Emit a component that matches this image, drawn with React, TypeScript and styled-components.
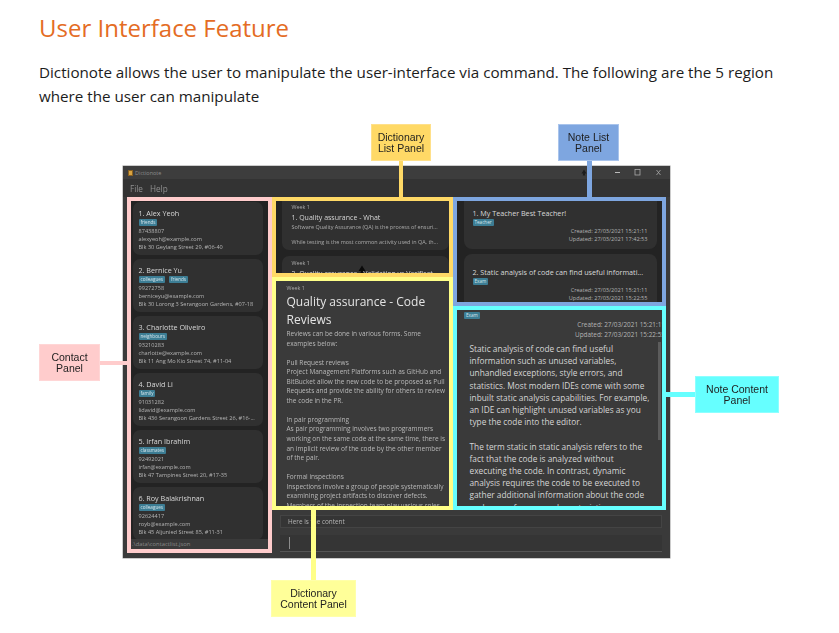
import React from 'react';
import styled, { createGlobalStyle } from 'styled-components';

const GlobalStyle = createGlobalStyle`
  html, body {
    margin: 0;
    padding: 0;
    background: #fff;
    overflow: hidden;
  }
`;

const uiFont = `"Open Sans", "Noto Sans", sans-serif`;

const Page = styled.div`
  width: 839px;
  height: 633px;
  padding: 12px 39px 0;
  box-sizing: border-box;
  overflow: hidden;
  font-family: ${uiFont};
`;

const Heading = styled.h2`
  margin: 0 0 16px;
  font-size: 24px;
  line-height: 32px;
  font-weight: 400;
  color: #e46c24;
`;

const Intro = styled.p`
  margin: 0;
  font-size: 15.2px;
  line-height: 24px;
  color: #1c1c1c;
`;

const Figure = styled.div`
  position: relative;
  height: 517px;
  margin: 8px -39px 0;
  padding-top: 50px;
  box-sizing: border-box;
`;

const Callout = styled.div<{ $x: number; $y: number; $w: number; $bg: string; $edge: string }>`
  position: absolute;
  left: ${(p) => p.$x}px;
  top: ${(p) => p.$y}px;
  width: ${(p) => p.$w}px;
  height: 37px;
  box-sizing: border-box;
  display: flex;
  align-items: center;
  justify-content: center;
  text-align: center;
  font-family: "Liberation Sans", sans-serif;
  font-size: 10.5px;
  line-height: 11px;
  color: #1e1e1e;
  background: ${(p) => p.$bg};
  border: 1px solid ${(p) => p.$edge};
  filter: blur(0.3px);
`;

const Wire = styled.div<{ $x: number; $y: number; $w: number; $h: number; $bg: string }>`
  position: absolute;
  left: ${(p) => p.$x}px;
  top: ${(p) => p.$y}px;
  width: ${(p) => p.$w}px;
  height: ${(p) => p.$h}px;
  background: ${(p) => p.$bg};
`;

const Window = styled.div`
  width: 547px;
  height: 392px;
  margin-left: 123px;
  display: flex;
  flex-direction: column;
  background: #3a3a3a;
  box-shadow: 0 0 0 0.5px #999;
  filter: blur(0.35px);
`;

const TitleBar = styled.div`
  height: 13px;
  flex: none;
  display: flex;
  align-items: center;
  padding: 0 8px 0 5px;
  background: #3d3d3d;
  color: #8c8c8c;
  font-size: 5.5px;
`;

const AppIcon = styled.span`
  width: 5px;
  height: 6px;
  margin-right: 2px;
  background: #d9a441;
  border: 0.5px solid #8a6120;
  box-sizing: border-box;
`;

const TitleText = styled.span`
  flex: 1;
`;

const WinControls = styled.div`
  display: flex;
  align-items: center;
  gap: 13px;
`;

const HoverMark = styled.svg`
  margin-right: 14px;
`;

const MenuBar = styled.div`
  height: 18px;
  flex: none;
  display: flex;
  align-items: center;
  gap: 7px;
  padding: 0 7px;
  background: #333;
  color: #8f8f8f;
  font-size: 8.2px;
`;

const Panels = styled.div`
  flex: 1;
  min-height: 0;
  padding: 0 4px 5px;
  display: grid;
  grid-template-columns: 145px 181px 213px;
  grid-template-rows: 80px 29px 204px 43px;
`;

const Panel = styled.section<{ $column: string; $row: string; $edge: string; $bg: string }>`
  grid-column: ${(p) => p.$column};
  grid-row: ${(p) => p.$row};
  position: relative;
  min-height: 0;
  border: 4.5px solid ${(p) => p.$edge};
  background: ${(p) => p.$bg};
  overflow: hidden;
  display: flex;
  flex-direction: column;
`;

const ContactStack = styled.div`
  flex: 1;
  min-height: 0;
  overflow: hidden;
  padding: 0.5px 5.5px 0 1.5px;
  display: flex;
  flex-direction: column;
  gap: 4px;
`;

const Card = styled.div`
  flex: none;
  height: 53px;
  box-sizing: border-box;
  padding: 6.5px 0 0 6px;
  background: #303030;
  border-radius: 7px;
`;

const CardTitle = styled.div`
  font-size: 7.2px;
  line-height: 10px;
  font-weight: 500;
  color: #d8d8d8;
  white-space: nowrap;
`;

const TagRow = styled.div`
  display: flex;
  gap: 4px;
  height: 8px;
  margin: 1px 0 0;
`;

const Tag = styled.span`
  padding: 0 2px;
  background: #3c7d94;
  color: #d6e6ec;
  font-size: 4.6px;
  line-height: 7px;
  height: 7px;
  border-radius: 1px;
`;

const Detail = styled.div`
  font-size: 5.6px;
  line-height: 8px;
  color: #b4b4b4;
  white-space: nowrap;
`;

const StatusBar = styled.div`
  flex: none;
  height: 10px;
  padding-left: 1px;
  background: #3a3a3a;
  color: #8a8a8a;
  font-size: 5.8px;
  line-height: 10px;
`;

const WordStack = styled.div`
  padding: 0 0 0 5.5px;
  display: flex;
  flex-direction: column;
  gap: 6px;
`;

const WordCard = styled.div`
  flex: none;
  height: 49px;
  box-sizing: border-box;
  padding: 2px 0 0 10px;
  background: #303030;
  border-radius: 0 0 7px 7px;
  overflow: hidden;

  & + & {
    padding-top: 3px;
    border-radius: 7px 7px 0 0;
  }
`;

const WeekLabel = styled.div`
  font-size: 5.4px;
  line-height: 9px;
  color: #aaa;
`;

const WordTitle = styled.div`
  font-size: 7px;
  line-height: 11px;
  color: #d4d4d4;
  white-space: nowrap;
`;

const Snippet = styled.div`
  font-size: 5.45px;
  line-height: 8px;
  margin-bottom: 7px;
  color: #ababab;
  white-space: nowrap;
`;

const Pointer = styled.svg`
  position: absolute;
  left: 82px;
  bottom: 0;
`;

const ArticleBody = styled.div`
  padding: 3px 0 0 10.5px;
`;

const ArticleTitle = styled.div`
  font-size: 12px;
  line-height: 17.5px;
  color: #e4e4e4;
  white-space: pre;
`;

const ArticleText = styled.div`
  margin-top: 1px;
  font-size: 6.5px;
  line-height: 9.55px;
  color: #b9b9b9;
  white-space: pre;
`;

const NoteStack = styled.div`
  padding: 0 5.5px 0 6.5px;
  display: flex;
  flex-direction: column;
  gap: 5px;
`;

const NoteCard = styled.div`
  flex: none;
  height: 48px;
  box-sizing: border-box;
  padding: 7px 9px 0;
  background: #303030;
  border-radius: 0 0 8px 8px;

  & + & {
    height: 60px;
    padding-top: 13px;
    border-radius: 8px 8px 0 0;
  }
`;

const Stamp = styled.div`
  text-align: right;
  font-size: 5.6px;
  line-height: 8px;
  color: #b4b4b4;
`;

const NoteHeader = styled.div`
  padding: 1px 0 0 7px;
`;

const NoteStamp = styled.div`
  text-align: right;
  margin-right: -3px;
  font-size: 6.4px;
  line-height: 10px;
  color: #b4b4b4;
  white-space: nowrap;
`;

const NoteText = styled.div`
  margin: 3px 0 0 5.5px;
  font-size: 8.3px;
  line-height: 12.2px;
  color: #d6d6d6;
  white-space: pre;
`;

const ScrollThumb = styled.div`
  position: absolute;
  right: 1px;
  top: 32px;
  width: 3px;
  height: 98px;
  background: #5c5c5c;
`;

const ConsoleArea = styled.div`
  grid-column: 2 / 4;
  grid-row: 4;
  padding: 5px 4px 0 8px;
  display: flex;
  flex-direction: column;
  gap: 7px;
`;

const ResultBox = styled.div`
  height: 13px;
  box-sizing: border-box;
  padding-left: 7px;
  background: #353535;
  border: 0.5px solid #444;
  color: #b5b5b5;
  font-size: 6.4px;
  line-height: 12px;
`;

const CommandBox = styled.div`
  height: 17px;
  padding: 2px 0 2px 9px;
  box-sizing: border-box;
  background: #353535;
  border-bottom: 1px solid #555;
`;

const Caret = styled.div`
  width: 1px;
  height: 12px;
  background: #8c8c8c;
`;

const contacts = [
  { name: '1.  Alex Yeoh', tags: ['friends'], phone: '87438807', email: 'alexyeoh@example.com', address: 'Blk 30 Geylang Street 29, #06-40' },
  { name: '2.  Bernice Yu', tags: ['colleagues', 'friends'], phone: '99272758', email: 'berniceyu@example.com', address: 'Blk 30 Lorong 3 Serangoon Gardens, #07-18' },
  { name: '3.  Charlotte Oliveiro', tags: ['neighbours'], phone: '93210283', email: 'charlotte@example.com', address: 'Blk 11 Ang Mo Kio Street 74, #11-04' },
  { name: '4.  David Li', tags: ['family'], phone: '91031282', email: 'lidavid@example.com', address: 'Blk 436 Serangoon Gardens Street 26, #16-...' },
  { name: '5.  Irfan Ibrahim', tags: ['classmates'], phone: '92492021', email: 'irfan@example.com', address: 'Blk 47 Tampines Street 20, #17-35' },
  { name: '6.  Roy Balakrishnan', tags: ['colleagues'], phone: '92624417', email: 'royb@example.com', address: 'Blk 45 Aljunied Street 85, #11-31' },
];

const notes = [
  { title: '1.  My Teacher Best Teacher!', tag: 'Teacher', created: '27/03/2021 15:21:11', updated: '27/03/2021 17:42:53' },
  { title: '2.  Static analysis of code can find useful informati...', tag: 'Exam', created: '27/03/2021 15:21:11', updated: '27/03/2021 15:22:55' },
];

const articleText = `Reviews can be done in various forms. Some
examples below:

Pull Request reviews
Project Management Platforms such as GitHub and
BitBucket allow the new code to be proposed as Pull
Requests and provide the ability for others to review
the code in the PR.

In pair programming
As pair programming involves two programmers
working on the same code at the same time, there is
an implicit review of the code by the other member
of the pair.

Formal inspections
Inspections involve a group of people systematically
examining project artifacts to discover defects.
Members of the inspection team play various roles`;

const noteText = `Static analysis of code can find useful
information such as unused variables,
unhandled exceptions, style errors, and
statistics. Most modern IDEs come with some
inbuilt static analysis capabilities. For example,
an IDE can highlight unused variables as you
type the code into the editor.

The term static in static analysis refers to the
fact that the code is analyzed without
executing the code. In contrast, dynamic
analysis requires the code to be executed to
gather additional information about the code
such as performance characteristics.`;

const App: React.FC = () => (
  <Page>
    <GlobalStyle />
    <Heading>User Interface Feature</Heading>
    <Intro>
      Dictionote allows the user to manipulate the user-interface via command. The following are
      the 5 region where the user can manipulate
    </Intro>
    <Figure>
      <Window>
        <TitleBar>
          <AppIcon />
          <TitleText>Dictionote</TitleText>
          <WinControls>
            <HoverMark width="6" height="7" viewBox="0 0 6 7">
              <path d="M3 0.5L5.5 4.5H3.8L4.2 6.5H1.8L2.2 4.5H0.5Z" fill="#1c1c1c" />
            </HoverMark>
            <svg width="7" height="7" viewBox="0 0 7 7">
              <path d="M1 3.5h5" stroke="#bbb" strokeWidth="1" />
            </svg>
            <svg width="8" height="7" viewBox="0 0 8 7">
              <rect x="1" y="0.5" width="5" height="5.5" fill="none" stroke="#aaa" strokeWidth="0.8" />
            </svg>
            <svg width="7" height="7" viewBox="0 0 7 7">
              <path d="M1.5 1l4 5M5.5 1l-4 5" stroke="#aaa" strokeWidth="0.8" />
            </svg>
          </WinControls>
        </TitleBar>
        <MenuBar>
          <span>File</span>
          <span>Help</span>
        </MenuBar>
        <Panels>
          <Panel $column="1" $row="1 / 5" $edge="#ffcccc" $bg="#232323">
            <ContactStack>
              {contacts.map((c) => (
                <Card key={c.name}>
                  <CardTitle>{c.name}</CardTitle>
                  <TagRow>
                    {c.tags.map((t) => (
                      <Tag key={t}>{t}</Tag>
                    ))}
                  </TagRow>
                  <Detail>{c.phone}</Detail>
                  <Detail>{c.email}</Detail>
                  <Detail>{c.address}</Detail>
                </Card>
              ))}
            </ContactStack>
            <StatusBar>.\data\contactlist.json</StatusBar>
          </Panel>

          <Panel $column="2" $row="1" $edge="#ffd966" $bg="#232323">
            <WordStack>
              <WordCard>
                <WeekLabel>Week 1</WeekLabel>
                <WordTitle>1.  Quality assurance - What</WordTitle>
                <Snippet>Software Quality Assurance (QA) is the process of ensuri...</Snippet>
                <Snippet>While testing is the most common activity used in QA, th...</Snippet>
              </WordCard>
              <WordCard>
                <WeekLabel>Week 1</WeekLabel>
                <WordTitle>2.  Quality assurance - Validation vs Verificat</WordTitle>
              </WordCard>
            </WordStack>
            <Pointer width="8" height="8" viewBox="0 0 8 8">
              <path d="M4 0.5L7.5 6H5L5.5 8H2.5L3 6H0.5Z" fill="#0a0a0a" />
            </Pointer>
          </Panel>

          <Panel $column="2" $row="2 / 4" $edge="#ffff88" $bg="#3a3a3a">
            <ArticleBody>
              <WeekLabel>Week 1</WeekLabel>
              <ArticleTitle>{'Quality assurance - Code\nReviews'}</ArticleTitle>
              <ArticleText>{articleText}</ArticleText>
            </ArticleBody>
          </Panel>

          <Panel $column="3" $row="1 / 3" $edge="#7ea6e0" $bg="#232323">
            <NoteStack>
              {notes.map((n) => (
                <NoteCard key={n.title}>
                  <CardTitle>{n.title}</CardTitle>
                  <TagRow>
                    <Tag>{n.tag}</Tag>
                  </TagRow>
                  <Stamp>Created: {n.created}</Stamp>
                  <Stamp>Updated: {n.updated}</Stamp>
                </NoteCard>
              ))}
            </NoteStack>
          </Panel>

          <Panel $column="3" $row="3" $edge="#66ffff" $bg="#3a3a3a">
            <NoteHeader>
              <TagRow>
                <Tag>Exam</Tag>
              </TagRow>
              <NoteStamp>Created: 27/03/2021 15:21:11</NoteStamp>
              <NoteStamp>Updated: 27/03/2021 15:22:55</NoteStamp>
              <NoteText>{noteText}</NoteText>
            </NoteHeader>
            <ScrollThumb />
          </Panel>

          <ConsoleArea>
            <ResultBox>Here is the content</ResultBox>
            <CommandBox>
              <Caret />
            </CommandBox>
          </ConsoleArea>
        </Panels>
      </Window>

      <Wire $x={399} $y={45} $w={4} $h={36} $bg="#ffd966" />
      <Wire $x={587} $y={45} $w={5} $h={36} $bg="#7ea6e0" />
      <Wire $x={100} $y={245} $w={27} $h={4} $bg="#ffcccc" />
      <Wire $x={666} $y={276} $w={29} $h={5} $bg="#66ffff" />
      <Wire $x={311} $y={394} $w={5} $h={70} $bg="#ffff88" />

      <Callout $x={371} $y={8} $w={60} $bg="#ffd966" $edge="#ffe08a">Dictionary<br />List Panel</Callout>
      <Callout $x={558} $y={8} $w={61} $bg="#7ea6e0" $edge="#a9c4ec">Note List<br />Panel</Callout>
      <Callout $x={39} $y={228} $w={61} $bg="#ffcccc" $edge="#ffd6d6">Contact<br />Panel</Callout>
      <Callout $x={695} $y={260} $w={84} $bg="#66ffff" $edge="#8cffff">Note Content<br />Panel</Callout>
      <Callout $x={271} $y={464} $w={85} $bg="#ffff99" $edge="#ffffaa">Dictionary<br />Content Panel</Callout>
    </Figure>
  </Page>
);

export default App;
